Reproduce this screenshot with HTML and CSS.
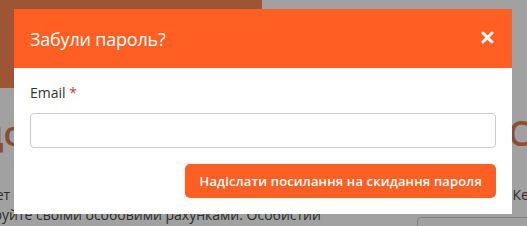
FILE: index.html
```html
<!DOCTYPE html>
<html lang="uk">
<head>
    <meta charset="UTF-8">
    <meta name="viewport" content="width=device-width, initial-scale=1.0">
    <title>Забули пароль?</title>
    <link rel="stylesheet" href="styles.css">
</head>
<body>

<!-- сторінка під модальним вікном -->
<div class="page">
    <div class="hero-banner"></div>
    <div class="page-heading">
        <span>Вхід до кабінета</span>
        <span>Сервіс о</span>
    </div>
    <div class="page-text">
        <p class="line-one"><span>Особистий кабінет</span><span>Керуйте рахун</span></p>
        <p class="line-two">Керуйте своїми особовими рахунками. Особистий</p>
    </div>
    <div class="page-box"></div>
</div>

<div class="overlay"></div>

<div class="modal">
    <div class="modal-header">
        <h2>Забули пароль?</h2>
        <button class="close-btn" aria-label="Закрити">
            <svg width="13" height="13" viewBox="0 0 13 13">
                <path d="M2 2 L11 11 M11 2 L2 11" stroke="#fff" stroke-width="3" stroke-linecap="round"/>
            </svg>
        </button>
    </div>
    <div class="modal-body">
        <label for="email-input">Email <span class="required">*</span></label>
        <input type="email" id="email-input">
        <div class="actions">
            <button class="submit-btn">Надіслати посилання на скидання пароля</button>
        </div>
    </div>
</div>

</body>
</html>
```

FILE: styles.css
```css
body {
    margin: 0;
    font-family: "Open Sans", "Noto Sans", sans-serif;
    background-color: #fff;
    color: #333;
    overflow: hidden;
}

/* фон сторінки */
.page {
    position: relative;
    height: 226px;
    overflow: hidden;
}
.hero-banner {
    width: 262px;
    height: 88px;
    background-color: #f88754;
}
.page-heading {
    display: flex;
    justify-content: space-between;
    margin: 22px -120px 0 -98px;
    font-size: 34px;
    font-weight: 600;
    color: #e07a4c;
    white-space: nowrap;
}
.page-text {
    margin-top: 29px;
    font-size: 14px;
    line-height: 20px;
    color: #4a4a4a;
}
.page-text p {
    margin: 0;
    white-space: nowrap;
}
.line-one {
    display: flex;
    justify-content: space-between;
    margin: 0 -84px 0 -118px !important;
}
.line-two {
    margin-left: -23px !important;
}
.page-box {
    position: absolute;
    left: 417px;
    top: 217px;
    width: 140px;
    height: 20px;
    border: 1px solid #ccc;
    border-radius: 4px;
}

.overlay {
    position: fixed;
    inset: 0;
    background-color: rgba(0, 0, 0, 0.37);
}

/* модальне вікно */
.modal {
    position: fixed;
    left: 14px;
    top: 9px;
    width: 498px;
    background-color: #fff;
}
.modal-header {
    display: flex;
    align-items: center;
    justify-content: space-between;
    height: 59px;
    padding: 0 18px 0 16px;
    background-color: #ff5f22;
}
.modal-header h2 {
    margin: 0;
    font-size: 18px;
    font-weight: 500;
    letter-spacing: -0.2px;
    color: #fff;
}
.close-btn {
    padding: 0;
    border: none;
    background: none;
    cursor: pointer;
    display: flex;
    margin-top: -3px;
}

.modal-body {
    display: flex;
    flex-direction: column;
    padding: 15px 16px 16px;
}
.modal-body label {
    font-size: 14px;
    line-height: 20px;
    color: #333;
    margin-bottom: 10px;
}
.required {
    color: #d0393b;
}
.modal-body input {
    height: 35px;
    box-sizing: border-box;
    border: 1px solid #ccc;
    border-radius: 4px;
    font-size: 14px;
    padding: 0 10px;
}
.actions {
    display: flex;
    justify-content: flex-end;
    margin-top: 16px;
}
.submit-btn {
    height: 34px;
    padding: 0 14px;
    border: none;
    border-radius: 5px;
    background-color: #ff5f22;
    color: #fff;
    font-family: inherit;
    font-size: 13px;
    font-weight: 600;
    letter-spacing: 0.15px;
    cursor: pointer;
}
```
